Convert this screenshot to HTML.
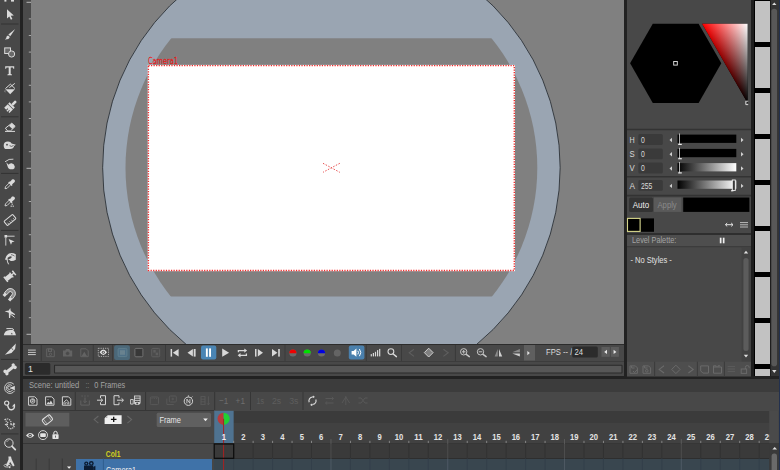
<!DOCTYPE html><html><head><meta charset="utf-8"><title>OpenToonz</title><style>
html,body{margin:0;padding:0;background:#484848;}
body{width:780px;height:470px;position:relative;overflow:hidden;font-family:"Liberation Sans",sans-serif;font-size:9px;color:#e6e6e6;}
.a{position:absolute;}
.t{position:absolute;white-space:nowrap;transform-origin:0 0;transform:scaleX(.84);line-height:10px;}
svg{position:absolute;left:0;top:0;overflow:visible}
</style></head><body>
<div class="a" style="left:0px;top:0px;width:20px;height:470px;background:#484848;"></div>
<div class="a" style="left:20px;top:0px;width:3px;height:470px;background:#222;"></div>
<div class="a" style="left:23px;top:0px;width:8px;height:343.6px;background:#4a4a4a;"></div>
<div class="a" style="left:31px;top:0;width:593px;height:343.6px;background:#808080;overflow:hidden">
<svg width="593" height="343" viewBox="31 0 593 343">
<circle cx="331.4" cy="167.7" r="228.75" fill="#9aa5b2" stroke="#20242a" stroke-width=".8"/>
<clipPath id="band"><rect x="0" y="38.2" width="780" height="258.4"/></clipPath>
<circle cx="331.4" cy="167.7" r="205.9" fill="#808080" clip-path="url(#band)"/>
<rect x="147.7" y="64.9" width="367.3" height="206.3" fill="#fff"/><rect x="148.4" y="65.6" width="365.9" height="204.9" fill="none" stroke="#f02c2c" stroke-width="1.4" stroke-dasharray="1.25 1.3"/>
<path d="M323 163.300 L339.800 172.300 M339.800 163.300 L323 172.300" stroke="#e85050" stroke-width="1" stroke-dasharray="1.5 1.5" fill="none"/>
<text x="148" y="64.1" font-size="9.4" fill="#f01010" stroke="#f01010" stroke-width=".3" font-weight="200" font-family="DejaVu Sans Light, DejaVu Sans, Liberation Sans, sans-serif" textLength="30" lengthAdjust="spacingAndGlyphs">Camera1</text>
</svg></div>
<div class="a" style="left:624px;top:0px;width:3px;height:378px;background:#222;"></div>
<div class="a" style="left:627px;top:0px;width:124px;height:378px;background:#484848;"></div>
<div class="a" style="left:751px;top:0px;width:29px;height:378px;background:#1e1e1e;"></div>
<div class="a" style="left:754.4px;top:0px;width:15.5px;height:377px;background:#000;"></div>
<div class="a" style="left:754.8px;top:0.9px;width:15px;height:41.6px;background:#c2c2c2;"></div>
<div class="a" style="left:754.8px;top:46.9px;width:15px;height:41.6px;background:#c2c2c2;"></div>
<div class="a" style="left:754.8px;top:92.9px;width:15px;height:41.6px;background:#c2c2c2;"></div>
<div class="a" style="left:754.8px;top:138.9px;width:15px;height:41.6px;background:#c2c2c2;"></div>
<div class="a" style="left:754.8px;top:184.9px;width:15px;height:41.6px;background:#c2c2c2;"></div>
<div class="a" style="left:754.8px;top:230.9px;width:15px;height:41.6px;background:#c2c2c2;"></div>
<div class="a" style="left:754.8px;top:276.9px;width:15px;height:41.6px;background:#c2c2c2;"></div>
<div class="a" style="left:754.8px;top:322.9px;width:15px;height:41.6px;background:#c2c2c2;"></div>
<div class="a" style="left:754.8px;top:368.9px;width:15px;height:7.7px;background:#c2c2c2;"></div>
<div class="a" style="left:770.5px;top:0px;width:8.3px;height:376.6px;background:#343434;"></div>
<div class="a" style="left:23px;top:343.6px;width:601px;height:1.2px;background:#2c2c2c;"></div>
<div class="a" style="left:23px;top:344.8px;width:601px;height:33px;background:#484848;"></div>
<div class="a" style="left:23px;top:361.2px;width:601px;height:0.8px;background:#3c3c3c;"></div>
<div class="a" style="left:20px;top:376.4px;width:760px;height:2.5px;background:#222;"></div>
<div class="a" style="left:23px;top:379px;width:757px;height:13px;background:#3c3c3c;"></div>
<div class="a" style="left:23px;top:392px;width:757px;height:18.5px;background:#484848;"></div>
<div class="a" style="left:23px;top:410.5px;width:757px;height:33px;background:#484848;"></div>
<div class="a" style="left:214px;top:410.5px;width:566px;height:12px;background:#3b3b3b;"></div>
<div class="a" style="left:214px;top:422.5px;width:566px;height:20.5px;background:#414141;"></div>
<div class="a" style="left:23px;top:442.8px;width:757px;height:1.1px;background:#363636;"></div>
<div class="a" style="left:23px;top:410px;width:191px;height:0.9px;background:#363636;"></div>
<div class="a" style="left:23px;top:444px;width:757px;height:14.5px;background:#3a3a3a;"></div>
<div class="a" style="left:23px;top:458.5px;width:757px;height:12px;background:#39464f;"></div>
<div class="a" style="left:214px;top:458px;width:555px;height:0.8px;background:#2e2e2e;"></div>
<div class="a" style="left:23px;top:444px;width:191px;height:14.5px;background:#484848;"></div>
<div class="a" style="left:23px;top:458.5px;width:53px;height:12px;background:#484848;"></div>
<div class="a" style="left:76px;top:458.5px;width:136.4px;height:12px;background:#3f72a8;"></div>
<div class="a" style="left:212.4px;top:458.5px;width:1.8px;height:12px;background:#464646;"></div>
<div class="a" style="left:778.8px;top:0px;width:1.2px;height:470px;background:#22304e;"></div>
<svg width="780" height="470" viewBox="0 0 780 470" font-family="Liberation Sans, sans-serif">
<path d="M41.3 345 V361" stroke="#3a3a3a" stroke-width="1"/>
<path d="M93.3 345 V361" stroke="#3a3a3a" stroke-width="1"/>
<path d="M112.6 345 V361" stroke="#3a3a3a" stroke-width="1"/>
<path d="M165.5 345 V361" stroke="#3a3a3a" stroke-width="1"/>
<path d="M285 345 V361" stroke="#3a3a3a" stroke-width="1"/>
<path d="M366.3 345 V361" stroke="#3a3a3a" stroke-width="1"/>
<path d="M401.5 345 V361" stroke="#3a3a3a" stroke-width="1"/>
<path d="M455.4 345 V361" stroke="#3a3a3a" stroke-width="1"/>
<path d="M28 350.1H35.8M28 352.4H35.8M28 354.6H35.8" stroke="#c8c8c8" stroke-width="1"/>
<g fill="none" stroke="#636363" stroke-width="1"><path d="M46.7 348.8h5.6l2 2v5.9h-7.6z"/><rect x="48.5" y="349" width="3" height="2.4"/><circle cx="50.5" cy="354.3" r="1.2"/></g>
<g fill="#636363"><path d="M63 350.4h2.2l.9-1.4h3.2l.9 1.4h2v6h-9.2z"/></g><circle cx="67.6" cy="353.4" r="1.7" fill="#4a4a4a" stroke="#555" stroke-width=".5"/>
<g fill="none" stroke="#636363" stroke-width="1"><path d="M80.8 348.8h5.4l2 2v5.9h-7.4z"/></g><path d="M81.5 356.3l2.8-4.6 2.8 4.6z" fill="#636363"/>
<rect x="98.300" y="348.300" width="10.200" height="8.100" fill="none" stroke="#c8c8c8" stroke-width=".8" stroke-dasharray="1.200 1.050"/>
<path d="M99.600 352.300q3.700-5.400 7.400 0q-3.700 5.400-7.400 0z" fill="#e8e8e8"/><circle cx="103.300" cy="352.300" r="1.500" fill="#484848"/><circle cx="103.300" cy="352.300" r=".7" fill="#e0e0e0"/>
<rect x="114.100" y="345.300" width="15.800" height="14.600" rx="2" fill="#4b6879"/>
<rect x="118.100" y="348.400" width="8.800" height="8.200" rx="1.200" fill="#4f7086" stroke="#62808f" stroke-width=".9"/><rect x="120" y="350.200" width="5" height="4.600" fill="#69828f"/>
<rect x="134.9" y="348.4" width="8" height="8.4" rx="1" fill="#383838" stroke="#727272" stroke-width="1"/>
<rect x="151.7" y="348.4" width="8" height="8.4" rx="1" fill="#4c4c4c" stroke="#5e5e5e" stroke-width="1"/>
<rect x="153.3" y="350" width="2.4" height="2.6" fill="#5e5e5e"/><rect x="155.7" y="352.6" width="2.4" height="2.6" fill="#5e5e5e"/>
<g fill="#d8d8d8">
<rect x="170.6" y="349" width="1.5" height="7.6"/><path d="M178.6 349v7.6l-5.8-3.8z"/>
<path d="M192.9 349v7.6l-5.4-3.8z"/><rect x="193.7" y="349" width="1.9" height="7.6"/>
</g>
<rect x="201" y="345.4" width="15.3" height="14.2" rx="2" fill="#4a85b4"/>
<rect x="205.9" y="348.4" width="1.9" height="8.4" fill="#fff"/><rect x="209.1" y="348.4" width="1.9" height="8.4" fill="#fff"/>
<g fill="#d8d8d8">
<path d="M222.2 348.6v8.2l6.9-4.1z"/>
<rect x="255" y="349" width="1.5" height="7.6"/><path d="M257.8 349v7.6l5.2-3.8z"/>
<path d="M272 349v7.6l5.4-3.8z"/><rect x="278.2" y="349" width="1.6" height="7.6"/>
</g>
<g fill="none" stroke="#d8d8d8" stroke-width="1.3"><path d="M238.4 352.2v-1.6h6.6"/><path d="M246.4 353.4v1.9h-6.6"/></g>
<path d="M244.3 348.4l2.8 2.2-2.8 2.2z M240.5 353.1l-2.8 2.2 2.8 2.2z" fill="#d8d8d8"/>
<circle cx="292.9" cy="353" r="3.6" fill="#6a6a6a"/>
<path d="M289.3 353.2a3.6 3.6 0 0 1 7.2 0z" fill="#f00000"/>
<circle cx="307.2" cy="353" r="3.6" fill="#6a6a6a"/>
<path d="M303.6 353.2a3.6 3.6 0 0 1 7.2 0z" fill="#00e000"/>
<circle cx="321.5" cy="353" r="3.6" fill="#6a6a6a"/>
<path d="M317.9 353.2a3.6 3.6 0 0 1 7.2 0z" fill="#0000e0"/>
<circle cx="337.3" cy="353" r="3.5" fill="#646464"/>
<rect x="348.8" y="345.4" width="15.6" height="14.2" rx="2" fill="#4a80ad"/>
<path d="M351.6 351h2l2.8-2.4v8.2l-2.8-2.4h-2z" fill="#fff"/>
<g fill="none" stroke="#fff" stroke-width="1"><path d="M357.8 350.8q1.4 1.8 0 3.6"/><path d="M359.4 349q2.8 3.6 0 7.2"/></g>
<rect x="370.7" y="354.1" width="1.2" height="2.3" fill="#d8d8d8"/>
<rect x="372.8" y="353" width="1.2" height="3.4" fill="#d8d8d8"/>
<rect x="374.9" y="351.8" width="1.2" height="4.6" fill="#d8d8d8"/>
<rect x="377" y="350.1" width="1.2" height="6.3" fill="#d8d8d8"/>
<rect x="379.1" y="348.9" width="1.2" height="7.5" fill="#d8d8d8"/>
<circle cx="390.9" cy="351.6" r="2.9" fill="none" stroke="#d8d8d8" stroke-width="1.1"/>
<path d="M393.251 353.951L396.4 356.6" stroke="#d8d8d8" stroke-width="1.5" stroke-linecap="round"/>
<path d="M414 349.2l-4.8 3.6 4.8 3.6" fill="none" stroke="#5e5e5e" stroke-width="1.1"/>
<path d="M443.4 349.2l4.8 3.6-4.8 3.6" fill="none" stroke="#5e5e5e" stroke-width="1.1"/>
<path d="M428.7 348.2l4.4 4.4-4.4 4.4-4.4-4.4z" fill="#808080" stroke="#cfcfcf" stroke-width="1"/>
<circle cx="463.7" cy="351.8" r="3.2" fill="none" stroke="#c4c4c4" stroke-width="1"/>
<path d="M466.263 354.363L469.3 356.6" stroke="#c4c4c4" stroke-width="1.5" stroke-linecap="round"/>
<path d="M461.9 351.8h3.6M463.7 350v3.6" stroke="#c4c4c4" stroke-width="1"/>
<circle cx="480.5" cy="351.8" r="3.2" fill="none" stroke="#c4c4c4" stroke-width="1"/>
<path d="M483.063 354.363L486.1 356.6" stroke="#c4c4c4" stroke-width="1.5" stroke-linecap="round"/>
<path d="M478.7 351.8h3.6" stroke="#c4c4c4" stroke-width="1"/>
<path d="M497.8 349v7.6h-3.2z" fill="#8a8a8a"/><path d="M499 349v7.6h3.2z" fill="#d0d0d0"/>
<path d="M519.9 352.2h-7.6l7.6-3.2z" fill="#8a8a8a"/><path d="M519.9 353.4h-7.6l7.6 3.2z" fill="#d0d0d0"/>
<rect x="524" y="345" width="11" height="15.5" fill="#5f5f5f"/><path d="M527.3 351v4.2l2.6-2.1z" fill="#e0e0e0"/>
<text x="546" y="355.4" font-size="8.8" fill="#dcdcdc" textLength="26.3" lengthAdjust="spacingAndGlyphs">FPS -- /</text>
<rect x="572.2" y="346.4" width="25.6" height="11.2" rx="1.5" fill="#2b2b2b"/>
<text x="574.4" y="355.4" font-size="8.8" fill="#dcdcdc" textLength="8.6" lengthAdjust="spacingAndGlyphs">24</text>
<rect x="601.5" y="347" width="8.3" height="9.8" fill="#5c5c5c"/><rect x="610.8" y="347" width="8.1" height="9.8" fill="#5c5c5c"/>
<path d="M607 349.8v4.2l-2.8-2.1z M613.6 349.8v4.2l2.8-2.1z" fill="#e8e8e8"/>
<rect x="24.9" y="363" width="25.4" height="11.7" rx="1.5" fill="#2b2b2b"/>
<text x="28" y="372.3" font-size="8.8" fill="#e0e0e0">1</text>
<rect x="54.5" y="365.2" width="567.5" height="7.800" rx=".4" fill="#575757" stroke="#2a2a2a" stroke-width="1.100"/>
<path d="M75.3 392 V410" stroke="#363636" stroke-width="1"/>
<path d="M145.6 392 V410" stroke="#363636" stroke-width="1"/>
<path d="M214.7 392 V410" stroke="#363636" stroke-width="1"/>
<path d="M250.5 392 V410" stroke="#363636" stroke-width="1"/>
<path d="M303 392 V410" stroke="#363636" stroke-width="1"/>
<path d="M28.6 396.8h6.100l2.300 2.300v6.100h-8.400z" fill="#3a3a3a" stroke="#d4d4d4" stroke-width="1"/>
<path d="M45.6 396.8h6.100l2.300 2.300v6.100h-8.400z" fill="#3a3a3a" stroke="#d4d4d4" stroke-width="1"/>
<path d="M62.4 396.8h6.100l2.300 2.300v6.100h-8.400z" fill="#3a3a3a" stroke="#d4d4d4" stroke-width="1"/>
<circle cx="32.600" cy="401" r="2.300" fill="none" stroke="#d4d4d4" stroke-width=".9"/><path d="M32 402.600v-3h1a.9 .9 0 0 1 0 1.800h-1" fill="none" stroke="#d4d4d4" stroke-width=".8"/>
<path d="M46.400 404.300l1.800-2.600 1.200 1.400 1.500-2.700 2.100 3.900z" fill="#d4d4d4"/><circle cx="48" cy="399.600" r=".7" fill="#aaa"/>
<path d="M64 404.400v-2.200l2.400-2.400 2.400 2.400v2.200" fill="none" stroke="#d4d4d4" stroke-width="1"/><path d="M65.400 404.400v-1.700h2v1.700" fill="none" stroke="#d4d4d4" stroke-width=".7"/>
<g fill="none" stroke="#626262" stroke-width="1"><path d="M80.8 400.5v4.6h8.5v-4.6"/><path d="M85 397.5v5M83.3 401l1.7 1.7 1.7-1.7"/><path d="M81.5 396h1.2M84.4 396h1.2M87.3 396h1.2" /></g>
<g fill="none" stroke="#d4d4d4" stroke-width="1"><path d="M100.5 398v-2.3h5v9h-5v-2.3"/><path d="M97 400.2h5.6M100.8 398.4l1.9 1.8-1.9 1.8"/></g>
<g fill="none" stroke="#d4d4d4" stroke-width="1"><path d="M119 398v-2.3h-5v9h5v-2.3"/><path d="M117 400.2h6.2M121.6 398.4l1.9 1.8-1.9 1.8"/></g>
<g fill="none" stroke="#d4d4d4" stroke-width=".9"><rect x="134.5" y="396" width="5.6" height="6.5"/><path d="M134.5 398.2h5.6M134.5 400.4h5.6"/><path d="M130.6 399.5v4.6h2.6v-4.6z"/></g>
<path d="M133.8 403.4q3.4-3.2 6.8 0q-3.4 3.2-6.8 0z" fill="#d4d4d4"/><circle cx="137.2" cy="403.4" r="1" fill="#484848"/>
<g fill="none" stroke="#585858" stroke-width="1"><rect x="150.3" y="397" width="8.2" height="7.6" rx="1"/><path d="M151.5 398.6h1M153.8 398.6h1M156.1 398.6h1" /></g>
<g fill="none" stroke="#585858" stroke-width="1"><rect x="169.3" y="396" width="7" height="6" rx="1"/><path d="M166.8 398.5v6h7"/><path d="M171.5 399h2.6M172.8 397.7v2.6"/></g>
<circle cx="188.4" cy="401.2" r="4.2" fill="none" stroke="#d4d4d4" stroke-width="1"/><path d="M186.9 403.3v-4.2l3 4.2v-4.2" fill="none" stroke="#d4d4d4" stroke-width=".9"/><path d="M188.4 396.6v-1.2M191.4 397.6l1-1" stroke="#d4d4d4" stroke-width="1"/>
<g fill="none" stroke="#585858" stroke-width="1"><rect x="201" y="396.6" width="4" height="8"/><path d="M201 399.2h4M201 401.8h4"/><path d="M208.4 396.4v8.4M207.2 403.4l1.2 1.4 1.2-1.4"/></g>
<text x="219" y="403.8" font-size="9.5" fill="#6e6e6e" font-weight="400" textLength="9.2" lengthAdjust="spacingAndGlyphs" >−1</text>
<text x="235.6" y="403.8" font-size="9.5" fill="#6e6e6e" font-weight="400" textLength="9.4" lengthAdjust="spacingAndGlyphs" >+1</text>
<text x="256.6" y="403.8" font-size="8.5" fill="#5e5e5e" font-weight="400" textLength="7.6" lengthAdjust="spacingAndGlyphs" >1s</text>
<text x="272" y="403.8" font-size="8.5" fill="#5e5e5e" font-weight="400" textLength="9.2" lengthAdjust="spacingAndGlyphs" >2s</text>
<text x="289.2" y="403.8" font-size="8.5" fill="#5e5e5e" font-weight="400" textLength="9.2" lengthAdjust="spacingAndGlyphs" >3s</text>
<g fill="none" stroke="#d4d4d4" stroke-width="1.2"><path d="M309.2 402.2a3.6 3.6 0 0 1 3.2-5"/><path d="M315.8 399.4a3.6 3.6 0 0 1-3.2 5"/></g>
<circle cx="313.4" cy="396.8" r="1.1" fill="#d4d4d4"/><circle cx="311.6" cy="404.8" r="1.1" fill="#d4d4d4"/>
<g fill="none" stroke="#585858" stroke-width="1"><path d="M325.5 398.5h8M331.8 397l1.7 1.5-1.7 1.5"/><path d="M333.5 403h-8M327.2 401.5l-1.7 1.5 1.7 1.5"/></g>
<g fill="none" stroke="#585858" stroke-width="1"><path d="M345.8 396v9M342 403l3.8-6 3.8 6"/></g>
<g fill="none" stroke="#585858" stroke-width="1"><path d="M358.5 398h2.5l4 5h2.5M358.5 403h2.5l4-5h2.5"/></g>
<rect x="25.5" y="412.8" width="43.8" height="13.7" fill="#5e5e5e"/>
<g transform="rotate(-38 47.4 419.8)"><rect x="42.6" y="416.6" width="9.6" height="6.4" rx="1.6" fill="none" stroke="#e0e0e0" stroke-width="1"/><path d="M44.6 416.6v6.4M50.2 416.6v6.4" stroke="#e0e0e0" stroke-width=".6"/></g>
<path d="M26 435.4q4.1-4.6 8.2 0q-4.1 4.6-8.2 0z" fill="#e4e4e4"/><circle cx="30.1" cy="435.4" r="1.7" fill="#484848"/><circle cx="30.1" cy="435.4" r=".7" fill="#e4e4e4"/>
<circle cx="43" cy="435.1" r="4.5" fill="none" stroke="#e0e0e0" stroke-width=".9"/><rect x="40.2" y="433.2" width="5.6" height="3.8" rx=".8" fill="#e4e4e4"/>
<rect x="52.4" y="434.2" width="6.2" height="4.7" rx=".6" fill="#e4e4e4"/><path d="M53.8 434.2v-1.2a1.7 1.7 0 0 1 3.4 0v1.2" fill="none" stroke="#e4e4e4" stroke-width="1"/><rect x="55.1" y="435.6" width=".8" height="2" fill="#484848"/>
<path d="M98.4 416l-4.2 3.6 4.2 3.6" fill="none" stroke="#666" stroke-width="1.1"/>
<path d="M127.4 416l4.2 3.6-4.2 3.6" fill="none" stroke="#666" stroke-width="1.1"/>
<path d="M107.800 415.200h13.800v8.700h-17v-5.500z" fill="#f0f0f0"/><path d="M105.300 418l2.200-2.200v2.200z" fill="#8a8a8a" stroke="#f0f0f0" stroke-width=".5"/>
<path d="M110.900 419.400h5.600M113.700 416.700v5.400" stroke="#111" stroke-width="1.300"/>
<rect x="156.7" y="412.7" width="54.3" height="14.2" rx="1.5" fill="#606060"/>
<text x="159.4" y="423" font-size="8.8" fill="#e6e6e6" font-weight="400" textLength="21.5" lengthAdjust="spacingAndGlyphs" >Frame</text>
<path d="M203.2 418.6h4.6l-2.3 2.6z" fill="#f0f0f0"/>
<text x="105.8" y="456.5" font-size="8.6" fill="#d2d020" font-weight="700" textLength="14.6" lengthAdjust="spacingAndGlyphs" >Col1</text>
<path d="M36.2 458.5V470" stroke="#3a3a3a" stroke-width="1"/>
<path d="M49.2 458.5V470" stroke="#3a3a3a" stroke-width="1"/>
<path d="M62.3 458.5V470" stroke="#3a3a3a" stroke-width="1"/>
<path d="M103.4 458.5V470" stroke="#2f5f8f" stroke-width="1"/>
<path d="M67 466.4h4.2l-2.1 2.3z" fill="#f0f0f0"/>
<g fill="#0b1c33"><circle cx="86.300" cy="463.600" r="2.100" /><circle cx="91.300" cy="463.400" r="2.400"/><rect x="84" y="465.500" width="9.200" height="5"/><path d="M93.200 467l2.200-1.300v4.300h-2.200z"/></g><circle cx="86.300" cy="463.600" r=".8" fill="#3f72a8"/><circle cx="91.300" cy="463.400" r="1" fill="#3f72a8"/>
<text x="106" y="472.6" font-size="8.8" fill="#f0f0f0" font-weight="400" textLength="30" lengthAdjust="spacingAndGlyphs" >Camera1</text>
<rect x="214.2" y="410.8" width="19.463" height="32.2" fill="#4f7391"/>
<text x="241.269" y="440.1" font-size="9.8" font-weight="700" fill="#e4e4e4" textLength="4.25" lengthAdjust="spacingAndGlyphs">2</text>
<text x="260.732" y="440.1" font-size="9.8" font-weight="700" fill="#e4e4e4" textLength="4.25" lengthAdjust="spacingAndGlyphs">3</text>
<text x="280.195" y="440.1" font-size="9.8" font-weight="700" fill="#e4e4e4" textLength="4.25" lengthAdjust="spacingAndGlyphs">4</text>
<text x="299.659" y="440.1" font-size="9.8" font-weight="700" fill="#e4e4e4" textLength="4.25" lengthAdjust="spacingAndGlyphs">5</text>
<text x="319.121" y="440.1" font-size="9.8" font-weight="700" fill="#e4e4e4" textLength="4.25" lengthAdjust="spacingAndGlyphs">6</text>
<text x="338.584" y="440.1" font-size="9.8" font-weight="700" fill="#e4e4e4" textLength="4.25" lengthAdjust="spacingAndGlyphs">7</text>
<text x="358.048" y="440.1" font-size="9.8" font-weight="700" fill="#e4e4e4" textLength="4.25" lengthAdjust="spacingAndGlyphs">8</text>
<text x="377.51" y="440.1" font-size="9.8" font-weight="700" fill="#e4e4e4" textLength="4.25" lengthAdjust="spacingAndGlyphs">9</text>
<text x="394.849" y="440.1" font-size="9.8" font-weight="700" fill="#e4e4e4" textLength="8.5" lengthAdjust="spacingAndGlyphs">10</text>
<text x="414.312" y="440.1" font-size="9.8" font-weight="700" fill="#e4e4e4" textLength="8.5" lengthAdjust="spacingAndGlyphs">11</text>
<text x="433.774" y="440.1" font-size="9.8" font-weight="700" fill="#e4e4e4" textLength="8.5" lengthAdjust="spacingAndGlyphs">12</text>
<text x="453.238" y="440.1" font-size="9.8" font-weight="700" fill="#e4e4e4" textLength="8.5" lengthAdjust="spacingAndGlyphs">13</text>
<text x="472.7" y="440.1" font-size="9.8" font-weight="700" fill="#e4e4e4" textLength="8.5" lengthAdjust="spacingAndGlyphs">14</text>
<text x="492.163" y="440.1" font-size="9.8" font-weight="700" fill="#e4e4e4" textLength="8.5" lengthAdjust="spacingAndGlyphs">15</text>
<text x="511.627" y="440.1" font-size="9.8" font-weight="700" fill="#e4e4e4" textLength="8.5" lengthAdjust="spacingAndGlyphs">16</text>
<text x="531.09" y="440.1" font-size="9.8" font-weight="700" fill="#e4e4e4" textLength="8.5" lengthAdjust="spacingAndGlyphs">17</text>
<text x="550.553" y="440.1" font-size="9.8" font-weight="700" fill="#e4e4e4" textLength="8.5" lengthAdjust="spacingAndGlyphs">18</text>
<text x="570.015" y="440.1" font-size="9.8" font-weight="700" fill="#e4e4e4" textLength="8.5" lengthAdjust="spacingAndGlyphs">19</text>
<text x="589.478" y="440.1" font-size="9.8" font-weight="700" fill="#e4e4e4" textLength="8.5" lengthAdjust="spacingAndGlyphs">20</text>
<text x="608.942" y="440.1" font-size="9.8" font-weight="700" fill="#e4e4e4" textLength="8.5" lengthAdjust="spacingAndGlyphs">21</text>
<text x="628.404" y="440.1" font-size="9.8" font-weight="700" fill="#e4e4e4" textLength="8.5" lengthAdjust="spacingAndGlyphs">22</text>
<text x="647.868" y="440.1" font-size="9.8" font-weight="700" fill="#e4e4e4" textLength="8.5" lengthAdjust="spacingAndGlyphs">23</text>
<text x="667.331" y="440.1" font-size="9.8" font-weight="700" fill="#e4e4e4" textLength="8.5" lengthAdjust="spacingAndGlyphs">24</text>
<text x="686.793" y="440.1" font-size="9.8" font-weight="700" fill="#e4e4e4" textLength="8.5" lengthAdjust="spacingAndGlyphs">25</text>
<text x="706.256" y="440.1" font-size="9.8" font-weight="700" fill="#e4e4e4" textLength="8.5" lengthAdjust="spacingAndGlyphs">26</text>
<text x="725.719" y="440.1" font-size="9.8" font-weight="700" fill="#e4e4e4" textLength="8.5" lengthAdjust="spacingAndGlyphs">27</text>
<text x="745.183" y="440.1" font-size="9.8" font-weight="700" fill="#e4e4e4" textLength="8.5" lengthAdjust="spacingAndGlyphs">28</text>
<text x="764.646" y="440.1" font-size="9.8" font-weight="700" fill="#e4e4e4" textLength="8.5" lengthAdjust="spacingAndGlyphs">29</text>
<path d="M233.663 444V458.5" stroke="#323232" stroke-width="1"/>
<path d="M233.663 458.5V470" stroke="#333f4a" stroke-width="1"/>
<path d="M233.663 440.800V443" stroke="#8c8c8c" stroke-width=".9"/>
<path d="M253.126 444V458.5" stroke="#323232" stroke-width="1"/>
<path d="M253.126 458.5V470" stroke="#333f4a" stroke-width="1"/>
<path d="M253.126 440.800V443" stroke="#8c8c8c" stroke-width=".9"/>
<path d="M272.589 444V458.5" stroke="#323232" stroke-width="1"/>
<path d="M272.589 458.5V470" stroke="#333f4a" stroke-width="1"/>
<path d="M272.589 440.800V443" stroke="#8c8c8c" stroke-width=".9"/>
<path d="M292.052 444V458.5" stroke="#323232" stroke-width="1"/>
<path d="M292.052 458.5V470" stroke="#333f4a" stroke-width="1"/>
<path d="M292.052 440.800V443" stroke="#8c8c8c" stroke-width=".9"/>
<path d="M311.515 444V458.5" stroke="#323232" stroke-width="1"/>
<path d="M311.515 458.5V470" stroke="#333f4a" stroke-width="1"/>
<path d="M311.515 440.800V443" stroke="#8c8c8c" stroke-width=".9"/>
<path d="M330.978 444V458.5" stroke="#4e4e4e" stroke-width="1"/>
<path d="M330.978 458.5V470" stroke="#4e5964" stroke-width="1"/>
<path d="M330.978 439V444" stroke="#5e5e5e" stroke-width=".9"/>
<path d="M350.441 444V458.5" stroke="#323232" stroke-width="1"/>
<path d="M350.441 458.5V470" stroke="#333f4a" stroke-width="1"/>
<path d="M350.441 440.800V443" stroke="#8c8c8c" stroke-width=".9"/>
<path d="M369.904 444V458.5" stroke="#323232" stroke-width="1"/>
<path d="M369.904 458.5V470" stroke="#333f4a" stroke-width="1"/>
<path d="M369.904 440.800V443" stroke="#8c8c8c" stroke-width=".9"/>
<path d="M389.367 444V458.5" stroke="#323232" stroke-width="1"/>
<path d="M389.367 458.5V470" stroke="#333f4a" stroke-width="1"/>
<path d="M389.367 440.800V443" stroke="#8c8c8c" stroke-width=".9"/>
<path d="M408.83 444V458.5" stroke="#323232" stroke-width="1"/>
<path d="M408.83 458.5V470" stroke="#333f4a" stroke-width="1"/>
<path d="M408.83 440.800V443" stroke="#8c8c8c" stroke-width=".9"/>
<path d="M428.293 444V458.5" stroke="#323232" stroke-width="1"/>
<path d="M428.293 458.5V470" stroke="#333f4a" stroke-width="1"/>
<path d="M428.293 440.800V443" stroke="#8c8c8c" stroke-width=".9"/>
<path d="M447.756 444V458.5" stroke="#4e4e4e" stroke-width="1"/>
<path d="M447.756 458.5V470" stroke="#4e5964" stroke-width="1"/>
<path d="M447.756 439V444" stroke="#5e5e5e" stroke-width=".9"/>
<path d="M467.219 444V458.5" stroke="#323232" stroke-width="1"/>
<path d="M467.219 458.5V470" stroke="#333f4a" stroke-width="1"/>
<path d="M467.219 440.800V443" stroke="#8c8c8c" stroke-width=".9"/>
<path d="M486.682 444V458.5" stroke="#323232" stroke-width="1"/>
<path d="M486.682 458.5V470" stroke="#333f4a" stroke-width="1"/>
<path d="M486.682 440.800V443" stroke="#8c8c8c" stroke-width=".9"/>
<path d="M506.145 444V458.5" stroke="#323232" stroke-width="1"/>
<path d="M506.145 458.5V470" stroke="#333f4a" stroke-width="1"/>
<path d="M506.145 440.800V443" stroke="#8c8c8c" stroke-width=".9"/>
<path d="M525.608 444V458.5" stroke="#323232" stroke-width="1"/>
<path d="M525.608 458.5V470" stroke="#333f4a" stroke-width="1"/>
<path d="M525.608 440.800V443" stroke="#8c8c8c" stroke-width=".9"/>
<path d="M545.071 444V458.5" stroke="#323232" stroke-width="1"/>
<path d="M545.071 458.5V470" stroke="#333f4a" stroke-width="1"/>
<path d="M545.071 440.800V443" stroke="#8c8c8c" stroke-width=".9"/>
<path d="M564.534 444V458.5" stroke="#4e4e4e" stroke-width="1"/>
<path d="M564.534 458.5V470" stroke="#4e5964" stroke-width="1"/>
<path d="M564.534 439V444" stroke="#5e5e5e" stroke-width=".9"/>
<path d="M583.997 444V458.5" stroke="#323232" stroke-width="1"/>
<path d="M583.997 458.5V470" stroke="#333f4a" stroke-width="1"/>
<path d="M583.997 440.800V443" stroke="#8c8c8c" stroke-width=".9"/>
<path d="M603.46 444V458.5" stroke="#323232" stroke-width="1"/>
<path d="M603.46 458.5V470" stroke="#333f4a" stroke-width="1"/>
<path d="M603.46 440.800V443" stroke="#8c8c8c" stroke-width=".9"/>
<path d="M622.923 444V458.5" stroke="#323232" stroke-width="1"/>
<path d="M622.923 458.5V470" stroke="#333f4a" stroke-width="1"/>
<path d="M622.923 440.800V443" stroke="#8c8c8c" stroke-width=".9"/>
<path d="M642.386 444V458.5" stroke="#323232" stroke-width="1"/>
<path d="M642.386 458.5V470" stroke="#333f4a" stroke-width="1"/>
<path d="M642.386 440.800V443" stroke="#8c8c8c" stroke-width=".9"/>
<path d="M661.849 444V458.5" stroke="#323232" stroke-width="1"/>
<path d="M661.849 458.5V470" stroke="#333f4a" stroke-width="1"/>
<path d="M661.849 440.800V443" stroke="#8c8c8c" stroke-width=".9"/>
<path d="M681.312 444V458.5" stroke="#4e4e4e" stroke-width="1"/>
<path d="M681.312 458.5V470" stroke="#4e5964" stroke-width="1"/>
<path d="M681.312 439V444" stroke="#5e5e5e" stroke-width=".9"/>
<path d="M700.775 444V458.5" stroke="#323232" stroke-width="1"/>
<path d="M700.775 458.5V470" stroke="#333f4a" stroke-width="1"/>
<path d="M700.775 440.800V443" stroke="#8c8c8c" stroke-width=".9"/>
<path d="M720.238 444V458.5" stroke="#323232" stroke-width="1"/>
<path d="M720.238 458.5V470" stroke="#333f4a" stroke-width="1"/>
<path d="M720.238 440.800V443" stroke="#8c8c8c" stroke-width=".9"/>
<path d="M739.701 444V458.5" stroke="#323232" stroke-width="1"/>
<path d="M739.701 458.5V470" stroke="#333f4a" stroke-width="1"/>
<path d="M739.701 440.800V443" stroke="#8c8c8c" stroke-width=".9"/>
<path d="M759.164 444V458.5" stroke="#323232" stroke-width="1"/>
<path d="M759.164 458.5V470" stroke="#333f4a" stroke-width="1"/>
<path d="M759.164 440.800V443" stroke="#8c8c8c" stroke-width=".9"/>
<path d="M223.6 412.7a6.1 6.1 0 0 0 0 12.2z" fill="#b83a3a"/><path d="M223.6 412.7a6.1 6.1 0 0 1 0 12.2z" fill="#20d034"/>
<path d="M223.6 418.8V470" stroke="#a82222" stroke-width="1"/>
<rect x="214.2" y="444" width="19.5" height="14.3" fill="none" stroke="#0c0c0c" stroke-width="1.2"/>
<text x="221.832" y="440.1" font-size="9.8" font-weight="700" fill="#f0f0f0" textLength="4.25" lengthAdjust="spacingAndGlyphs">1</text>
<rect x="769.2" y="410.8" width="9.600" height="32.2" fill="#4a4a4a"/>
<rect x="769.2" y="443" width="9.600" height="27" fill="#3a3a3a"/>
<path d="M772.4 449.6l2.3-2.6 2.3 2.6z" fill="#e0e0e0"/>
<rect x="771.6" y="453.600" width="5.400" height="30" rx="2.600" fill="#6a6a6a"/>
<text x="29" y="388.3" font-size="9.4" fill="#a2a2a2" font-weight="400" textLength="50.3" lengthAdjust="spacingAndGlyphs" >Scene: untitled</text>
<text x="85.8" y="388" font-size="9.4" fill="#858585" font-weight="400" textLength="3.4" lengthAdjust="spacingAndGlyphs" >::</text>
<text x="94.3" y="388.3" font-size="9.4" fill="#a2a2a2" font-weight="400" textLength="30.9" lengthAdjust="spacingAndGlyphs" >0 Frames</text>
<path d="M630.1 63.3L652.8 23.7H698.6L721.3 63.3L698.6 102.9H652.8Z" fill="#000"/>
<defs><linearGradient id="gr" x1="0" y1="23.7" x2="0" y2="102.9" gradientUnits="userSpaceOnUse"><stop offset="0" stop-color="#f00"/><stop offset="1" stop-color="#000"/></linearGradient>
<linearGradient id="gw" x1="702.1" y1="23.7" x2="736.309" y2="4.04688" gradientUnits="userSpaceOnUse"><stop offset="0" stop-color="#000"/><stop offset="1" stop-color="#0ff"/></linearGradient></defs>
<g style="isolation:isolate"><path d="M702.1 23.7H747.6V102.9Z" fill="url(#gr)"/><path d="M702.1 23.7H747.6V102.9Z" fill="url(#gw)" style="mix-blend-mode:screen"/></g>
<rect x="673.7" y="61.5" width="3.6" height="3.6" fill="none" stroke="#e8e8e8" stroke-width=".9"/>
<path d="M748.2 101.2h-2.4v3.4h2.4" fill="none" stroke="#e8e8e8" stroke-width=".9"/>
<path d="M627 129.5H751" stroke="#333" stroke-width="1.6"/>
<path d="M627 176.8H751" stroke="#333" stroke-width="1.6"/>
<path d="M627 195.6H751" stroke="#333" stroke-width="1.6"/>
<defs><linearGradient id="bw" x1="677.5" x2="736.3" y1="0" y2="0" gradientUnits="userSpaceOnUse"><stop offset="0" stop-color="#000"/><stop offset="1" stop-color="#fff"/></linearGradient></defs>
<text x="629.6" y="142.6" font-size="8.3" fill="#d8d8d8" font-weight="400" textLength="5.2" lengthAdjust="spacingAndGlyphs" >H</text>
<rect x="638.4" y="134.1" width="24.4" height="10.8" rx="1.5" fill="#3a3a3a"/>
<text x="641" y="142.7" font-size="8.8" fill="#dcdcdc" font-weight="400" textLength="3.8" lengthAdjust="spacingAndGlyphs" >0</text>
<path d="M672 137.8v4.400l-2.500-2.200z" fill="#d0d0d0"/>
<path d="M741 137.8v4.400l2.500-2.200z" fill="#d0d0d0"/>
<rect x="677.5" y="134.6" width="58.8" height="8.3" fill="#000"/>
<path d="M679.5 133.5V144.3" stroke="#e4e4e4" stroke-width=".75"/><path d="M678.2 144.4h3.600" stroke="#ececec" stroke-width="1.200"/>
<text x="629.6" y="156.9" font-size="8.3" fill="#d8d8d8" font-weight="400" textLength="5.2" lengthAdjust="spacingAndGlyphs" >S</text>
<rect x="638.4" y="148.4" width="24.4" height="10.8" rx="1.5" fill="#3a3a3a"/>
<text x="641" y="157" font-size="8.8" fill="#dcdcdc" font-weight="400" textLength="3.8" lengthAdjust="spacingAndGlyphs" >0</text>
<path d="M672 152.1v4.400l-2.500-2.200z" fill="#d0d0d0"/>
<path d="M741 152.1v4.400l2.500-2.200z" fill="#d0d0d0"/>
<rect x="677.5" y="148.9" width="58.8" height="8.3" fill="#000"/>
<path d="M679.5 147.8V158.6" stroke="#e4e4e4" stroke-width=".75"/><path d="M678.2 158.7h3.600" stroke="#ececec" stroke-width="1.200"/>
<text x="629.6" y="171.1" font-size="8.3" fill="#d8d8d8" font-weight="400" textLength="5.2" lengthAdjust="spacingAndGlyphs" >V</text>
<rect x="638.4" y="162.6" width="24.4" height="10.8" rx="1.5" fill="#3a3a3a"/>
<text x="641" y="171.2" font-size="8.8" fill="#dcdcdc" font-weight="400" textLength="3.8" lengthAdjust="spacingAndGlyphs" >0</text>
<path d="M672 166.3v4.400l-2.500-2.200z" fill="#d0d0d0"/>
<path d="M741 166.3v4.400l2.500-2.200z" fill="#d0d0d0"/>
<rect x="677.5" y="163.1" width="58.8" height="8.3" fill="url(#bw)"/>
<path d="M679.5 162V172.8" stroke="#e4e4e4" stroke-width=".75"/><path d="M678.2 172.9h3.600" stroke="#ececec" stroke-width="1.200"/>
<text x="629.6" y="188.5" font-size="8.3" fill="#d8d8d8" font-weight="400" textLength="5.5" lengthAdjust="spacingAndGlyphs" >A</text>
<rect x="638.4" y="180" width="24.4" height="10.8" rx="1.5" fill="#3a3a3a"/>
<text x="641" y="188.6" font-size="8.8" fill="#dcdcdc" font-weight="400" textLength="11.4" lengthAdjust="spacingAndGlyphs" >255</text>
<path d="M672 183.7v4.400l-2.500-2.200z" fill="#d0d0d0"/>
<path d="M741 183.7v4.400l2.500-2.200z" fill="#d0d0d0"/>
<rect x="677.5" y="180.5" width="58.8" height="8.3" fill="url(#bw)"/>
<rect x="732.3" y="180" width="3" height="10.4" fill="#3a3a3a" stroke="#f4f4f4" stroke-width=".9"/><path d="M731 190.8h2.4" stroke="#f4f4f4" stroke-width="1.1"/>
<rect x="629.1" y="197.5" width="23.9" height="14.4" rx="1.5" fill="#333"/>
<text x="632.8" y="207.9" font-size="8.8" fill="#f0f0f0" font-weight="400" textLength="16.4" lengthAdjust="spacingAndGlyphs" >Auto</text>
<rect x="654" y="197.5" width="27.4" height="14.4" fill="#5a5a5a"/>
<text x="657.5" y="207.9" font-size="8.8" fill="#8a8a8a" font-weight="400" textLength="19.2" lengthAdjust="spacingAndGlyphs" >Apply</text>
<rect x="683.2" y="197.5" width="66.2" height="14.4" fill="#000"/>
<rect x="640.3" y="218.4" width="13.7" height="13.4" fill="#000"/>
<rect x="627.5" y="218.4" width="12.6" height="13" fill="#000" stroke="#d6d68a" stroke-width="1.1"/>
<path d="M725.6 224.7h7.2M727.2 223l-1.8 1.7 1.8 1.7M731.2 223l1.8 1.7-1.8 1.7" fill="none" stroke="#e4e4e4" stroke-width="1"/>
<path d="M740 222.6h8M740 224.8h8M740 227h8" stroke="#c8c8c8" stroke-width=".9"/>
<rect x="627" y="233" width="124" height="2" fill="#2e2e2e"/>
<rect x="627" y="235" width="124" height="11.2" fill="#4e4e4e"/>
<rect x="627" y="246.2" width="124" height="1" fill="#3a3a3a"/>
<text x="632" y="243" font-size="8.8" fill="#a4a4a4" font-weight="400" textLength="44.3" lengthAdjust="spacingAndGlyphs" >Level Palette:</text>
<rect x="719.8" y="237.7" width="1.7" height="5.6" fill="#f0f0f0"/><rect x="722.8" y="237.7" width="1.7" height="5.6" fill="#f0f0f0"/>
<text x="630.4" y="263.1" font-size="8.8" fill="#e2e2e2" font-weight="400" textLength="41.5" lengthAdjust="spacingAndGlyphs" >- No Styles -</text>
<rect x="741.5" y="247.2" width="9.5" height="114.5" fill="#424242"/>
<rect x="743.4" y="258" width="5.2" height="93" rx="2.5" fill="#5c5c5c"/>
<path d="M743.8 253.4l2.2-2.6 2.2 2.6z M743.8 354.8l2.2 2.6 2.2-2.6z" fill="#e0e0e0"/>
<rect x="627" y="361.7" width="124" height="14.8" fill="#4e4e4e"/>
<path d="M654.6 361.7 V376.5" stroke="#3c3c3c" stroke-width="1"/>
<path d="M697.4 361.7 V376.5" stroke="#3c3c3c" stroke-width="1"/>
<path d="M724.4 361.7 V376.5" stroke="#3c3c3c" stroke-width="1"/>
<g fill="none" stroke="#6a6a6a" stroke-width="1"><path d="M630 365.9h5.4l2 2v5.4h-7.4z"/><path d="M631.6 366v2h3"/><path d="M633 371l1.6 1.6 3-3.4"/></g>
<g fill="none" stroke="#6a6a6a" stroke-width="1"><path d="M643 365.9h5.6l2 2v5.4h-7.6z"/><path d="M644.6 366v2h3"/><circle cx="646.8" cy="370.8" r="1.3"/></g>
<path d="M664 365.8l-4.8 3.6 4.8 3.6" fill="none" stroke="#6a6a6a" stroke-width="1.1"/>
<path d="M688.4 365.8l4.8 3.6-4.8 3.6" fill="none" stroke="#6a6a6a" stroke-width="1.1"/>
<path d="M675.9 365.2l4.2 4.2-4.2 4.2-4.2-4.2z" fill="none" stroke="#6a6a6a" stroke-width="1"/>
<path d="M700.7 365.9h7.8v7.2h-5.6l-2.2-2.2z" fill="none" stroke="#6a6a6a" stroke-width="1"/>
<path d="M713.5 367h8v6.2h-8z M713.5 367v-1.2h2.6v1.2 M718 367v-1.2h2" fill="none" stroke="#6a6a6a" stroke-width="1"/>
<path d="M727.6 366.6h7.4M727.6 369h7.4M727.6 371.4h7.4" stroke="#5c5c5c" stroke-width="1"/>
<rect x="741.2" y="369" width="5.4" height="4.4" fill="none" stroke="#6a6a6a" stroke-width="1"/><path d="M745.4 369v-1.6a1.9 1.9 0 0 1 3.8 0v.8" fill="none" stroke="#6a6a6a" stroke-width="1"/>
<rect x="771.4" y="8.8" width="5.7" height="357.4" rx="2.8" fill="#585858"/>
<path d="M772.1 5l2.2-2.6 2.2 2.600z M772.100 370.100l2.200 2.800 2.200-2.800z" fill="#dcdcdc"/>
<path d="M1 24H18.5" stroke="#333" stroke-width="1"/>
<path d="M1 116.8H18.5" stroke="#333" stroke-width="1"/>
<path d="M1 173.4H18.5" stroke="#333" stroke-width="1"/>
<path d="M1 230.4H18.5" stroke="#333" stroke-width="1"/>
<path d="M1 359.4H18.5" stroke="#333" stroke-width="1"/>
<path d="M1 433.9H18.5" stroke="#333" stroke-width="1"/>
<rect x="4.4" y="0" width="2" height="1.6" fill="#dadada"/><rect x="11" y="0" width="3" height="1.6" fill="#dadada"/>
<path d="M7 9.2v9.2l2.3-2 1.6 3.4 1.5-.7-1.6-3.3 3-.3z" fill="#dadada"/>
<path d="M15.200 29l-6.800 5.400 1.900 1.900z" fill="#dadada"/><path d="M8.1 35.4l1.7 1.7q-.6 2.6-4.9 2.5 1.8-1.3 1.6-2.8.3-1.2 1.6-1.4z" fill="#dadada"/>
<rect x="4.7" y="47.9" width="5.8" height="5.6" fill="#6a6a6a" stroke="#dadada" stroke-width="1"/><circle cx="11.6" cy="54" r="3.1" fill="#6a6a6a" stroke="#dadada" stroke-width="1"/>
<path d="M5.2 66.2h9v2.6h-.9l-.4-1.4h-2.2v6.6l1.3.4v.9h-4.6v-.9l1.3-.4v-6.6h-2.2l-.4 1.4h-.9z" fill="#dadada"/>
<path d="M5.4 89.2h9.6l-4.8 5z" fill="#dadada"/><path d="M5.4 88.6l5-4.4 4.6 4.4" fill="none" stroke="#dadada" stroke-width="1"/><path d="M9.4 87.6l5.4-4.2" stroke="#dadada" stroke-width="1"/><path d="M5.2 89.6q-1.2 2 0 3.200z" fill="#dadada"/>
<g transform="rotate(45 10 107)"><rect x="8.8" y="98.6" width="2.6" height="5.4" rx=".8" fill="#dadada"/><rect x="6.4" y="104" width="7.4" height="2" fill="#dadada"/><path d="M6.4 106.6h7.4v5h-1.4v-2h-.9v2.600h-1.4v-2.600h-.9v2h-2.800z" fill="#dadada"/></g>
<path d="M5.4 128.2l6.400-5 3.400 3.200-4.800 4.600h-2.800z" fill="none" stroke="#dadada" stroke-width="1"/><path d="M9 125.700l3.300 3.200 2.800-2.600-3.300-3.100z" fill="#dadada"/><path d="M5 131.400h10" stroke="#dadada" stroke-width="1"/>
<path d="M3.700 145.400Q3.700 141.400 8 141.400Q10.800 141.400 11.600 143.600L15.900 144.700L14.100 146.100Q13.600 149 10 149H6.500Q3.700 149 3.700 145.400Z" fill="#dadada"/><circle cx="7" cy="144.700" r=".9" fill="#484848"/><path d="M9.600 145.700Q11.500 147.200 13.500 145.500" fill="none" stroke="#484848" stroke-width=".8"/>
<path d="M5 161.800q4-3.400 8.400-2.600" fill="none" stroke="#dadada" stroke-width=".9"/><path d="M6.200 162.200l2.400 2.600q.8-1.800 3-1.600 2.600.4 3.200 3.200.2 2.200-1.600 2.800h-3.200q-1.600-.2-2-1.600z" fill="#dadada"/>
<g transform="translate(0 179.4)"><path d="M5 9.300l.5-2 5-5 1.600 1.600-5 5z" fill="none" stroke="#dadada" stroke-width=".9"/><path d="M10 2.600l2-2.600q1.800-.6 2.800.8.600 1.400-.6 2.400l-2.200 1.600 .6.800-1 1-3.400-3.400 1-1z" fill="#dadada"/></g>
<g transform="translate(0 196.6)"><path d="M5 9.300l.5-2 5-5 1.600 1.600-5 5z" fill="none" stroke="#dadada" stroke-width=".9"/><path d="M10 2.600l2-2.600q1.800-.6 2.800.8.600 1.400-.6 2.400l-2.200 1.600 .6.800-1 1-3.400-3.400 1-1z" fill="#dadada"/></g>
<rect x="10.600" y="205.600" width="1.200" height="1.200" fill="#dadada"/><rect x="12.600" y="205.600" width="1.200" height="1.200" fill="#dadada"/><rect x="11.600" y="203.600" width="1.200" height="1.200" fill="#dadada"/>
<g transform="rotate(-40 10 220)"><rect x="4.400" y="217.200" width="11.200" height="5.600" rx=".8" fill="none" stroke="#dadada" stroke-width="1"/><path d="M6.400 222.600v-2M8.800 222.600v-2M11.200 222.600v-2M13.600 222.600v-2" stroke="#dadada" stroke-width=".7"/></g>
<rect x="4.500" y="235" width="2.600" height="2.600" fill="#dadada"/><path d="M7 236.200h7.600M5.800 237.600v8" stroke="#dadada" stroke-width=".9"/><path d="M8.600 239l6 2.400-2.600.8-1 2.600z" fill="#dadada"/>
<path d="M5 259.400q.6-3.800 4-6 3.600-1 6.800.8v5.600q-2.600 1.600-5 1.200l-2.400-1.700q-1.600.6-3.400.1z" fill="#dadada"/><ellipse cx="9.600" cy="257.700" rx="2.300" ry="1.100" transform="rotate(-25 9.600 257.700)" fill="#484848"/><path d="M11 254.600q2 .3 3.600 1.500" fill="none" stroke="#484848" stroke-width=".7"/><path d="M7 259.200q.3 2.800 1.600 5.100" fill="none" stroke="#dadada" stroke-width="1"/>
<g transform="rotate(52 9.600 276.400)"><rect x="7.300" y="274.400" width="4.600" height="6.400" fill="#dadada"/><rect x="8.900" y="271.200" width="1.400" height="3.400" fill="#dadada"/><rect x="6.800" y="270" width="5.600" height="1.500" fill="#dadada"/><rect x="6.400" y="280.400" width="6.400" height="1.500" fill="#dadada"/><rect x="6.600" y="273.400" width="6" height="1.300" fill="#dadada"/></g>
<g transform="rotate(40 10 294)"><path d="M5 296.600v-3.200a5 5 0 0 1 10 0v3.200h-3v-3.200a2 2 0 0 0-4 0v3.200z" fill="#8c8c8c" stroke="#dadada" stroke-width=".9"/><rect x="5" y="296.600" width="3" height="3" fill="#dadada"/><rect x="12" y="296.600" width="3" height="3" fill="#dadada"/></g>
<path d="M4.600 311.200l4.200-.6 1.400-2.600 .6 3 4.400 3.200-.6.800-4-1.600-.4 4.600h-1.200l-.2-5.200z" fill="#dadada"/><path d="M9 313l5.600 4.400" stroke="#dadada" stroke-width="1"/>
<path d="M3.800 335.200q.6-4.600 6-5.200h3.400q2.600 2.200 2.800 5.200z" fill="#dadada"/><path d="M6.400 328.600h5.400q1.600 0 1.800 1.400" fill="none" stroke="#dadada" stroke-width="1"/><path d="M10.800 334.200l1-1.400 1 1.400z" fill="#484848"/>
<path d="M4.900 354.800l11-11.200-.8 5.400-3.600 4z" fill="#dadada"/><path d="M11.400 348.200l1.800 1.600" stroke="#484848" stroke-width=".9"/>
<g transform="rotate(-38 10 369.300)"><rect x="5" y="367.900" width="10" height="3" fill="#dadada"/><circle cx="4.800" cy="367.900" r="1.700" fill="#dadada"/><circle cx="4.800" cy="370.900" r="1.700" fill="#dadada"/><circle cx="15.200" cy="367.900" r="1.700" fill="#dadada"/><circle cx="15.200" cy="370.900" r="1.700" fill="#dadada"/></g>
<g fill="none" stroke="#dadada" stroke-width=".9"><path d="M13.800 384.200a5.400 5.400 0 1 0 .8 6.600"/><path d="M12.200 385.800a3.400 3.400 0 1 0 .4 4.200"/><path d="M10.600 387a1.600 1.600 0 1 0 0 1.800"/></g><path d="M9.600 388l5.200-2.200v4.400z" fill="#dadada"/>
<circle cx="6.700" cy="403.100" r="2.100" fill="none" stroke="#dadada" stroke-width="1.200"/><path d="M7.500 405.100l.9 2.600a3.100 3.100 0 0 0 6-.7v-2.400" fill="none" stroke="#dadada" stroke-width="1.400"/><path d="M14.900 403.400l-3 3.200h3z" fill="#dadada"/>
<path d="M5 419.600q3-1.600 5 .6 2 2.400 .4 4.600 1.800-.6 4 .8-.6 2.600-3.600 3.200-2.800-.2-3.400-2.800-.2-2 .4-3.600-1.600-.8-2.800-2.800z" fill="none" stroke="#dadada" stroke-width="1.100" stroke-dasharray="1.300 .8"/><path d="M4.600 424.600l2.200-1.400v2.800z M15.400 424l-2.200-1.400v2.800z" fill="#dadada"/>
<circle cx="8.900" cy="443.100" r="4.200" fill="none" stroke="#dadada" stroke-width="1"/><path d="M12.100 446.300l3.200 3.300" stroke="#dadada" stroke-width="1.700" stroke-linecap="round"/><path d="M6.600 442a2.600 2.600 0 0 1 2-1.500" fill="none" stroke="#dadada" stroke-width=".6"/>
<path d="M8.400 456.600h2.600l.6 2.400 3 6.400-1.600 1-2.600-4.200-.4 0-2.200 4.200-1.800-.8 2.600-6.400z" fill="#dadada"/><ellipse cx="7.400" cy="465.600" rx="3.400" ry="1.500" fill="none" stroke="#dadada" stroke-width=".8"/><circle cx="9.700" cy="467.400" r=".8" fill="#dadada"/>
<path d="M26.500 2.3H31" stroke="#b8b8b8" stroke-width="1"/>
<path d="M28.800 18.9H31" stroke="#a8a8a8" stroke-width="1"/>
<path d="M28.800 35.5H31" stroke="#a8a8a8" stroke-width="1"/>
<path d="M28.800 52.1H31" stroke="#a8a8a8" stroke-width="1"/>
<path d="M28.800 68.7H31" stroke="#a8a8a8" stroke-width="1"/>
<path d="M28.800 85.3H31" stroke="#a8a8a8" stroke-width="1"/>
<path d="M28.800 101.9H31" stroke="#a8a8a8" stroke-width="1"/>
<path d="M28.800 118.5H31" stroke="#a8a8a8" stroke-width="1"/>
<path d="M28.800 135.1H31" stroke="#a8a8a8" stroke-width="1"/>
<path d="M28.800 151.7H31" stroke="#a8a8a8" stroke-width="1"/>
<path d="M26.500 168.3H31" stroke="#b8b8b8" stroke-width="1"/>
<path d="M28.800 184.9H31" stroke="#a8a8a8" stroke-width="1"/>
<path d="M28.800 201.5H31" stroke="#a8a8a8" stroke-width="1"/>
<path d="M28.800 218.1H31" stroke="#a8a8a8" stroke-width="1"/>
<path d="M28.800 234.7H31" stroke="#a8a8a8" stroke-width="1"/>
<path d="M28.800 251.3H31" stroke="#a8a8a8" stroke-width="1"/>
<path d="M28.800 267.9H31" stroke="#a8a8a8" stroke-width="1"/>
<path d="M28.800 284.5H31" stroke="#a8a8a8" stroke-width="1"/>
<path d="M28.800 301.1H31" stroke="#a8a8a8" stroke-width="1"/>
<path d="M28.800 317.7H31" stroke="#a8a8a8" stroke-width="1"/>
<path d="M26.500 334.3H31" stroke="#b8b8b8" stroke-width="1"/>
</svg>
</body></html>
